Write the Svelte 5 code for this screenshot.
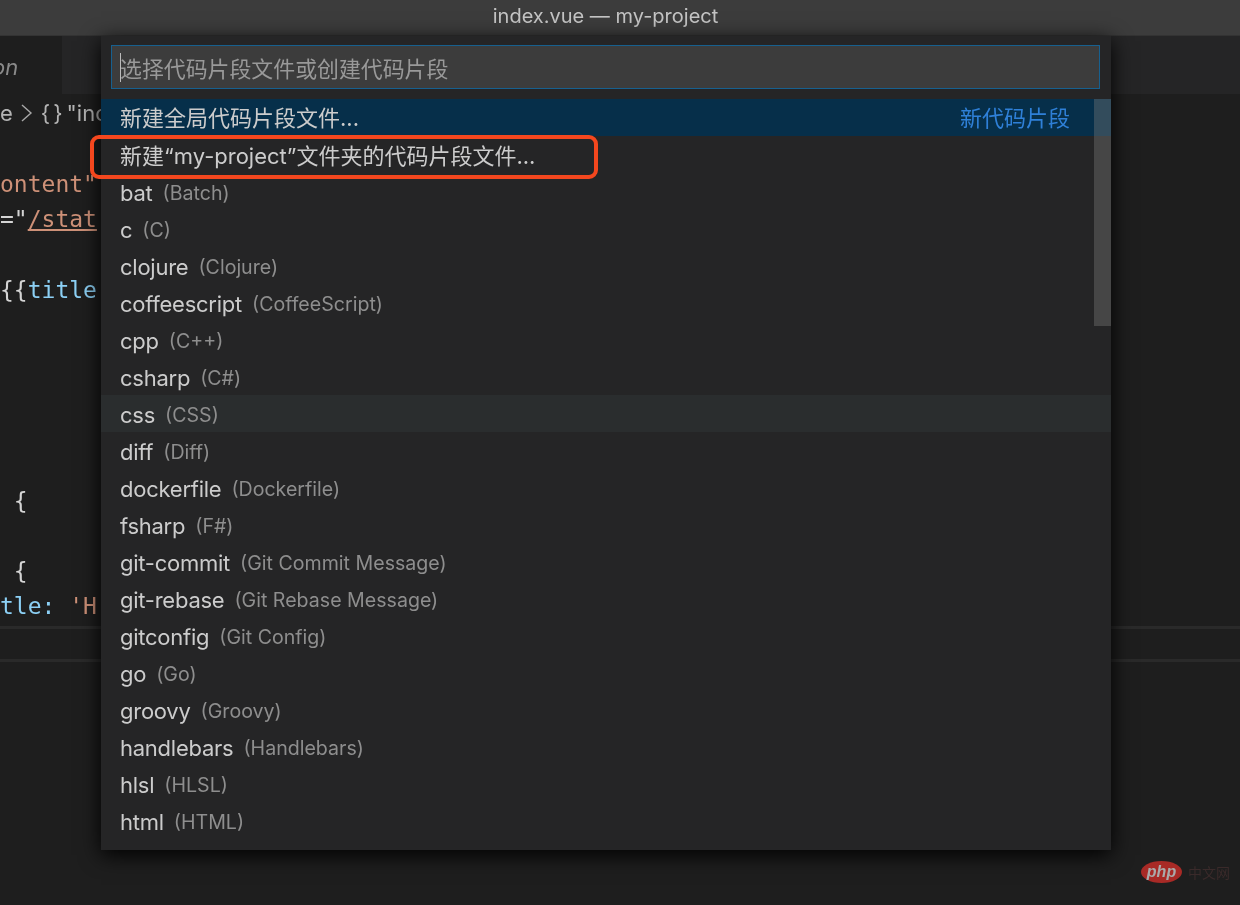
<script>
  const langs = [
    ['bat', 'Batch'], ['c', 'C'], ['clojure', 'Clojure'], ['coffeescript', 'CoffeeScript'],
    ['cpp', 'C++'], ['csharp', 'C#'], ['css', 'CSS'], ['diff', 'Diff'],
    ['dockerfile', 'Dockerfile'], ['fsharp', 'F#'], ['git-commit', 'Git Commit Message'],
    ['git-rebase', 'Git Rebase Message'], ['gitconfig', 'Git Config'], ['go', 'Go'],
    ['groovy', 'Groovy'], ['handlebars', 'Handlebars'], ['hlsl', 'HLSL'], ['html', 'HTML']
  ];

  const codeLines = [
    [],
    [['o', 'ontent"']],
    [['w', '="'], ['o link', '/stat']],
    [],
    [['w', '{{'], ['b', 'title']],
    [], [], [], [], [],
    [['w', ' {']],
    [],
    [['w', ' {']],
    [['b', 'tle:'], ['o', " 'H"]]
  ];
</script>

<div class="window">
  <header class="titlebar">index.vue — my-project</header>

  <div class="tabs">
    <div class="tab"><em>on</em></div>
  </div>

  <div class="crumbs">
    <span>e</span>
    <svg width="14" height="22" viewBox="0 0 14 22"><path d="M2 3l9 8-9 8" fill="none" stroke="#a8a8a8" stroke-width="1.4"/></svg>
    <span class="json">{'{}'}</span><span>"inc</span>
  </div>

  <div class="code">
    {#each codeLines as line}
      <div class="line">
        {#each line as [cls, text]}<span class={cls}>{text}</span>{/each}
      </div>
    {/each}
  </div>

  <div class="panel"></div>

  <div class="palette">
    <div class="input">
      <i class="caret"></i>
      <span>选择代码片段文件或创建代码片段</span>
    </div>
    <div class="list">
      <div class="row cjk focused">
        <span>新建全局代码片段文件...</span>
        <span class="action">新代码片段</span>
      </div>
      <div class="row cjk second">
        <span>新建“my-project”文件夹的代码片段文件...</span>
      </div>
      {#each langs as [name, desc]}
        <div class="row lang" class:hover={name === 'css'}>
          <span class="label">{name}</span>
          <span class="desc">({desc})</span>
        </div>
      {/each}
      <div class="thumb"></div>
    </div>
  </div>

  <div class="callout"></div>

  <div class="mark">
    <div class="logo"><span>php</span></div>
    <span class="cn">中文网</span>
  </div>
</div>

<style>
  :global(body) {
    margin: 0;
    background: #1e1e1e;
  }

  .window {
    position: relative;
    width: 1240px;
    height: 905px;
    overflow: hidden;
    background: #1e1e1e;
    font-family: Inter, "Noto Sans CJK SC", sans-serif;
    filter: blur(0.5px);
  }

  .titlebar {
    height: 35px;
    line-height: 33px;
    border-bottom: 1px solid #333;
    background: #3c3c3c;
    color: #c4c4c4;
    font-size: 20px;
    text-align: center;
    padding-right: 29px;
  }

  .tabs {
    display: flex;
    height: 58px;
    background: #252526;
  }
  .tab {
    width: 62px;
    background: #1e1e1e;
    color: #8a8a8a;
    font-size: 22px;
    line-height: 62px;
    overflow: hidden;
  }
  .tab em {
    margin-left: -8px;
  }

  .crumbs {
    display: flex;
    align-items: center;
    gap: 7px;
    height: 38px;
    color: #b4b4b4;
    font-size: 22px;
  }
  .json {
    letter-spacing: 3px;
    margin-right: -6px;
  }

  .code {
    height: 495px;
    box-sizing: border-box;
    font-family: "DejaVu Sans Mono", monospace;
    font-size: 23px;
  }
  .line {
    height: 35.2px;
    line-height: 35.2px;
    white-space: pre;
    color: #d4d4d4;
  }
  .o { color: #ce9178; }
  .b { color: #8cd0f5; }
  .w { color: #d4d4d4; }
  .link { text-decoration: underline; }

  .panel {
    border-top: 3px solid #2a2a2a;
    height: 30px;
    border-bottom: 3px solid #2a2a2a;
    margin-top: -1px;
  }

  .palette {
    position: absolute;
    left: 101px;
    top: 36px;
    width: 1010px;
    height: 814px;
    background: #252526;
    box-shadow: 0 5px 20px #000;
  }

  .input {
    display: flex;
    align-items: center;
    position: relative;
    box-sizing: border-box;
    margin: 9px 11px 0 10px;
    height: 44px;
    padding-left: 8px;
    background: #3c3c3c;
    border: 1px solid #17608f;
    color: #999;
    font-size: 21.9px;
  }
  .caret {
    position: absolute;
    left: 8px;
    top: 7px;
    width: 1px;
    height: 29px;
    background: #bbb;
  }

  .list {
    position: relative;
    margin-top: 10px;
  }
  .row {
    display: flex;
    align-items: center;
    gap: 10px;
    box-sizing: border-box;
    height: 37px;
    padding: 0 41px 0 19px;
    font-size: 22px;
    color: #ccc;
  }
  .cjk { padding-bottom: 3px; }
  .cjk.second { padding-bottom: 2px; }
  .lang { padding-top: 2px; }
  .label { letter-spacing: -0.25px; }
  .row.focused { background: #062f4a; }
  .row.hover { background: #2a2d2e; }
  .desc {
    color: #8e8e8e;
    font-size: 19.6px;
  }
  .action {
    margin-left: auto;
    color: #2f80d8;
  }
  .thumb {
    position: absolute;
    right: 0;
    top: 0;
    width: 17px;
    height: 227px;
    background: rgba(121, 121, 121, 0.4);
  }

  .callout {
    position: absolute;
    left: 90px;
    top: 135px;
    width: 500px;
    height: 36px;
    border: 4px solid #f4471e;
    border-radius: 9px;
  }

  .mark {
    position: absolute;
    left: 1141px;
    top: 861px;
    display: flex;
    align-items: center;
    gap: 6px;
  }
  .logo {
    width: 41px;
    height: 22px;
    border-radius: 50%;
    background: #a82a26;
    color: #aaa;
    font: italic bold 16px/21px "Liberation Sans", sans-serif;
    text-align: center;
  }
  .cn {
    color: #3a2a2a;
    font-size: 14px;
  }
</style>
